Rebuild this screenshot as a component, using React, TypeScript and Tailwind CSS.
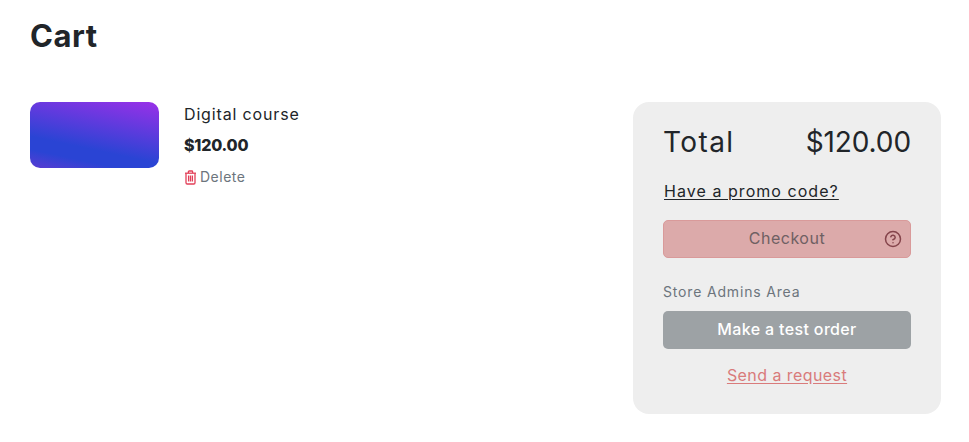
import { CircleHelp } from "lucide-react";

function TrashIcon() {
  return (
    <svg width="13" height="15" viewBox="0 0 13 15" fill="none" stroke="#e23f58" strokeWidth="1.3" className="shrink-0">
      <path d="M1 3.2h11" />
      <path d="M4.4 3V1.8c0-.5.3-.8.8-.8h2.6c.5 0 .8.3.8.8V3" />
      <path d="M2 3.2v9.6c0 .7.5 1.2 1.2 1.2h6.6c.7 0 1.2-.5 1.2-1.2V3.2" />
      <path d="M4.6 5.6v6M6.5 5.6v6M8.4 5.6v6" />
    </svg>
  );
}

export default function App() {
  return (
    <div className="h-[442px] w-[969px] overflow-hidden bg-white font-['Inter',sans-serif] text-[#212529]">
      <div className="px-[30px] pt-[17px]">
        <h1 className="text-[31px] leading-[38px] font-bold tracking-[0.5px]">Cart</h1>
      </div>

      <div className="mt-[47px] flex justify-between pl-[30px] pr-[28px]">
        <div className="flex">
          <div className="h-[66px] w-[129px] rounded-[10px] bg-[linear-gradient(192deg,#9a30e8_0%,#2a44d4_66%,#2a44d4_80%,#5a3cd2_100%)]" />
          <div className="ml-[25px] pt-px">
            <div className="text-[16px] leading-[22px] tracking-[0.85px]">Digital course</div>
            <div className="mt-[9px] text-[16px] leading-[22px] font-extrabold tracking-[-0.2px]">$120.00</div>
            <div className="mt-[11px] flex items-center gap-[3px] text-[14px] leading-[20px] tracking-[0.5px] text-[#6c757d]">
              <TrashIcon />
              <span>Delete</span>
            </div>
          </div>
        </div>

        <div className="h-[312px] w-[308px] rounded-[16px] bg-[#eeeeee] px-[30px] pt-[22px]">
          <div className="flex items-center justify-between text-[28px] leading-[36px]">
            <span className="tracking-[1.4px]">Total</span>
            <span className="tracking-[-0.1px]">$120.00</span>
          </div>
          <div className="mt-[19px] pl-px text-[16px] leading-[24px] tracking-[1.05px] underline underline-offset-2">Have a promo code?</div>
          <button className="relative mt-[17px] block h-[38px] w-full rounded-[5px] border border-[#d99a9a] bg-[#dcaaaa] pb-[2px] text-center text-[16px] tracking-[0.5px] text-[#6f6063]">
            Checkout
            <CircleHelp className="absolute right-[8px] top-[9px] h-[18px] w-[18px] text-[#85444b]" strokeWidth={2} />
          </button>
          <div className="mt-[24px] text-[14px] leading-[20px] tracking-[0.83px] text-[#6c757d]">Store Admins Area</div>
          <button className="mt-[9px] block h-[38px] w-full rounded-[5px] bg-[#9da2a5] pb-[2px] text-center text-[16px] font-medium tracking-[0.35px] text-white">
            Make a test order
          </button>
          <div className="mt-[14px] text-center text-[16px] leading-[24px] tracking-[0.43px] text-[#d97b7b] underline underline-offset-2">
            Send a request
          </div>
        </div>
      </div>
    </div>
  );
}
